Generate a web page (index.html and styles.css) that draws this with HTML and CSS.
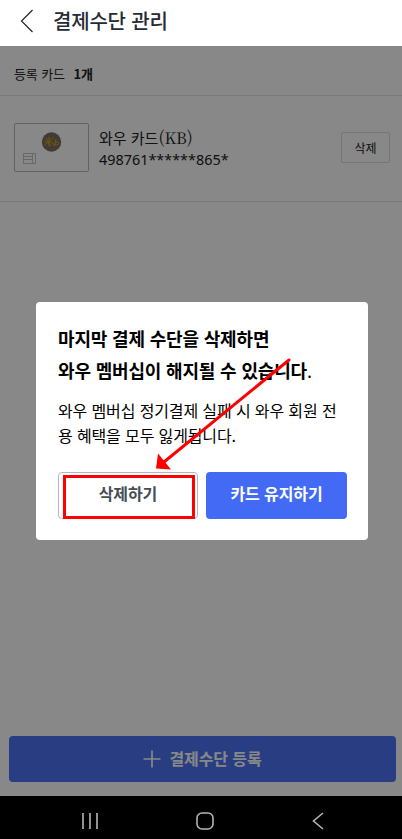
FILE: index.html
```html
<!DOCTYPE html>
<html lang="ko">
<head>
    <meta charset="UTF-8">
    <meta name="viewport" content="width=device-width, initial-scale=1.0">
    <title>결제수단 관리</title>
    <link rel="stylesheet" href="styles.css">
</head>
<body>
    <header class="header">
        <svg class="back" width="14" height="24" viewBox="0 0 14 24">
            <path d="M12.5 1 L1.5 12 L12.5 23" />
        </svg>
        <h1>결제수단 관리</h1>
    </header>

    <main class="content">
        <div class="summary">등록 카드 <strong>1개</strong></div>
        <div class="card-row">
            <div class="card-image">
                <svg width="73" height="47" viewBox="0 0 73 47">
                    <circle cx="36.5" cy="18" r="9.7" fill="#7a7060" />
                    <path class="kb" d="M31 14 L36 22 M29.500 21 L39 13.500 M34 13 V22.500 M29.500 17.500 L35 18.500 M35.500 17.500 L40 21.500 M41 15 L39.500 21 Q44.500 21.500 43.500 18.500 Q42.500 17 40 19" />
                    <path class="chip" d="M8.500 29.500 H20.500 V39.500 H8.500 Z M17.500 29.500 V39.500 M8.500 32.500 H17.500 M8.500 35.500 H17.500" />
                </svg>
            </div>
            <div class="card-info">
                <div class="card-name">와우 카드<span>(KB)</span></div>
                <div class="card-number">498761******865*</div>
            </div>
            <button class="remove">삭제</button>
        </div>
        <button class="add">
            <svg width="18" height="18" viewBox="0 0 18 18">
                <path d="M9 0.500 V17.500 M0.500 9 H17.500" />
            </svg>
            <span>결제수단 등록</span>
        </button>

        <div class="overlay">
            <div class="modal">
                <h2>마지막 결제 수단을 삭제하면<br>와우 멤버십이 해지될 수 있습니다<span>.</span></h2>
                <p>와우 멤버십 정기결제 실패 시 와우 회원 전<br>용 혜택을 모두 잃게됩니다.</p>
                <div class="modal-buttons">
                    <button class="delete">삭제하기</button>
                    <button class="keep">카드 유지하기</button>
                </div>
            </div>
        </div>
    </main>

    <nav class="navbar">
        <svg width="16" height="18" viewBox="0 0 16 18">
            <path d="M1 1 V17 M8 1 V17 M15 1 V17" />
        </svg>
        <svg width="18" height="18" viewBox="0 0 18 18">
            <rect x="1" y="1" width="16" height="16" rx="5" />
        </svg>
        <svg width="12" height="18" viewBox="0 0 12 18">
            <path d="M11 1 L1.500 9 L11 17" />
        </svg>
    </nav>

    <!-- arrow and box pointing at the delete button -->
    <svg class="marker" width="402" height="839" viewBox="0 0 402 839">
        <rect x="64.500" y="476.500" width="129" height="41" />
        <path class="line" d="M289 360 L164 462" />
        <path class="tip" d="M156 468.500 L158 453.500 L171 469.500 Z" />
    </svg>
</body>
</html>
```

FILE: styles.css
```css
* {
    box-sizing: border-box;
}
body {
    margin: 0;
    width: 402px;
    height: 839px;
    display: flex;
    flex-direction: column;
    position: relative;
    overflow: hidden;
    background-color: #fff;
    font-family: "Noto Sans CJK KR", sans-serif;
}
h1, h2, p {
    margin: 0;
}
button {
    font-family: inherit;
    padding: 0;
    border: none;
    cursor: pointer;
}
svg {
    display: block;
    fill: none;
}
.header {
    height: 46px;
    display: flex;
    align-items: center;
    gap: 19px;
    padding: 0 0 4px 20px;
}
.header h1 {
    font-size: 20px;
    font-weight: 500;
    line-height: 30px;
    letter-spacing: -0.2px;
    color: #252b35;
}
.back {
    stroke: #22262c;
    stroke-width: 1.2;
}
.content {
    height: 749.5px;
    display: flex;
    flex-direction: column;
    position: relative;
}
.summary {
    height: 50px;
    padding: 7px 14px 0;
    border-bottom: 1px solid #e4e4e4;
    font-size: 13px;
    line-height: 41px;
    letter-spacing: -0.1px;
    color: #222;
}
.summary strong {
    margin-left: 5px;
}
.card-row {
    height: 106px;
    display: flex;
    align-items: center;
    padding: 0 12px 2px 14px;
    border-bottom: 1px solid #e4e4e4;
}
.card-image {
    width: 75px;
    height: 49px;
    border: 1px solid #b8b8b8;
    border-radius: 2px;
}
.kb {
    stroke: #d3a51e;
    stroke-width: 1;
}
.chip {
    stroke: #c4c4c4;
}
.card-info {
    flex: 1;
    padding: 2px 0 0 10px;
    color: #202020;
}
.card-name {
    font-size: 15px;
    line-height: 22px;
}
.card-name span {
    font-family: "Noto Serif CJK KR", "Liberation Serif", serif;
    font-size: 16px;
    line-height: 20px;
}
.card-number {
    font-family: "Noto Sans", sans-serif;
    font-size: 14.4px;
    line-height: 22px;
}
.remove {
    width: 49px;
    height: 31px;
    border: 1px solid #dcdcdc;
    border-radius: 2px;
    background-color: #fff;
    font-size: 12px;
    color: #222;
}
.add {
    height: 46px;
    margin: auto 6px 13.5px 9px;
    display: flex;
    justify-content: center;
    align-items: center;
    gap: 8px;
    border-radius: 4px;
    background-color: #4d72f5;
    color: #fff;
    font-size: 16px;
    font-weight: 700;
    letter-spacing: -0.1px;
}
.add span {
    padding-bottom: 3px;
}
.add svg {
    stroke: #fff;
    stroke-width: 1.7;
    margin-bottom: 1px;
}
.overlay {
    position: absolute;
    inset: 0;
    display: flex;
    justify-content: center;
    align-items: flex-start;
    padding-top: 255.5px;
    background-color: rgba(0, 0, 0, 0.465);
}
.modal {
    width: 332px;
    height: 238px;
    margin-left: 2px;
    padding: 20.5px 21px 0 22px;
    border-radius: 4px;
    background-color: #fff;
    color: #000;
}
.modal h2 {
    font-size: 18px;
    line-height: 32px;
    letter-spacing: -0.17px;
}
.modal h2 span {
    font-weight: 400;
}
.modal p {
    margin-top: 12px;
    font-size: 16px;
    line-height: 25px;
    letter-spacing: -0.13px;
    white-space: nowrap;
}
.modal-buttons {
    display: flex;
    gap: 8px;
    margin-top: 23.5px;
}
.modal-buttons button {
    width: 141px;
    height: 47px;
    padding-bottom: 4px;
    border-radius: 4px;
    font-size: 16px;
    font-weight: 700;
    letter-spacing: -0.1px;
}
.modal-buttons .delete {
    width: 140px;
    border: 1px solid #b0b5bd;
    background-color: #fff;
    color: #454c56;
}
.modal-buttons .keep {
    background-color: #436af5;
    color: #fff;
}
.navbar {
    flex: 1;
    display: flex;
    align-items: center;
    justify-content: space-between;
    padding: 7px 78px 0 82px;
    background-color: #000;
}
.navbar svg {
    stroke: #b5b5b5;
    stroke-width: 1.6;
}
.marker {
    position: absolute;
    top: 0;
    left: 0;
    pointer-events: none;
    stroke: #f00;
    stroke-width: 3;
}
.marker .line {
    stroke-linecap: round;
}
.marker .tip {
    fill: #f00;
    stroke: none;
}
```
